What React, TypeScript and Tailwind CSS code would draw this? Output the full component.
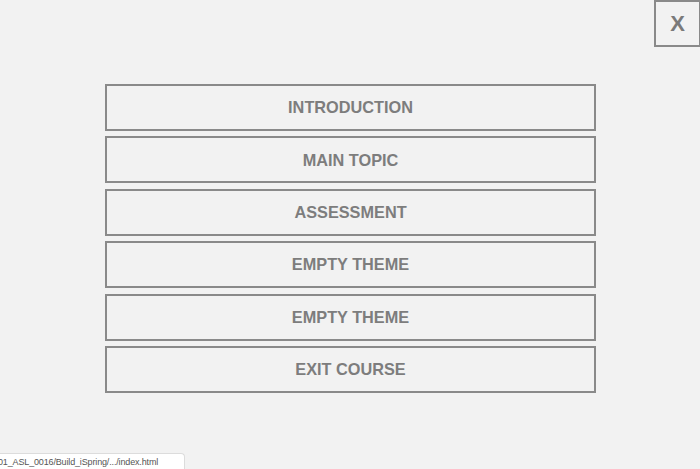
const items = ['INTRODUCTION', 'MAIN TOPIC', 'ASSESSMENT', 'EMPTY THEME', 'EMPTY THEME', 'EXIT COURSE'];

export default function App() {
  return (
    <div className="relative w-[700px] h-[469px] bg-[#f2f2f2] overflow-hidden" style={{ fontFamily: '"Liberation Sans", Arial, sans-serif' }}>
      {/* close button */}
      <div className="flex justify-end">
        <button className="w-[47px] h-[47px] border-2 border-[#8a8a8a] bg-[#f2f2f2] text-[22px] font-bold text-[#7a7a7a] flex items-center justify-center -mr-[1px]">
          X
        </button>
      </div>

      {/* menu */}
      <div className="flex flex-col gap-[5.4px] ml-[105px] w-[491px] mt-[37px]">
        {items.map((label, i) => (
          <button
            key={i}
            className="h-[47px] w-full border-2 border-[#8a8a8a] bg-[#f2f2f2] text-[16.3px] font-bold text-[#7d7d7d] flex items-center justify-center"
          >
            {label}
          </button>
        ))}
      </div>

      {/* status bar */}
      <div className="absolute left-0 bottom-0 w-[185px] h-[16px] bg-white border-t border-r border-[#dcdcdc] rounded-tr-sm text-[9px] tracking-[-0.15px] leading-[16px] text-[#555] whitespace-nowrap overflow-hidden">
        <span className="-ml-[2px]">01_ASL_0016/Build_iSpring/.../index.html</span>
      </div>
    </div>
  );
}
